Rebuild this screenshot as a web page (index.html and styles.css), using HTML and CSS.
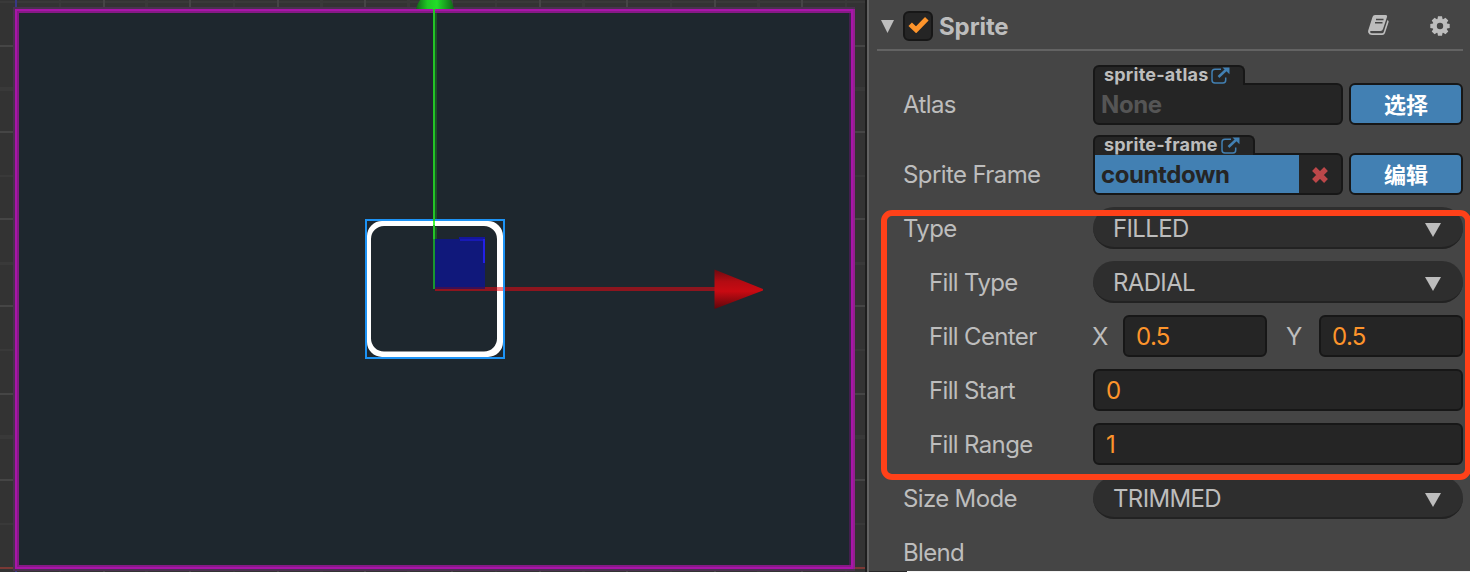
FILE: index.html
```html
<!DOCTYPE html>
<html lang="zh">
<head>
<meta charset="utf-8">
<title>Sprite</title>
<link rel="stylesheet" href="styles.css">
</head>
<body>
<main class="editor">
  <section class="scene">
    <svg class="canvas" width="865" height="572" viewBox="0 0 865 572" shape-rendering="crispEdges">
      <defs>
        <linearGradient id="red" x1="0" y1="0" x2="0" y2="1"><stop offset="0" stop-color="#6b0a10"/><stop offset=".3" stop-color="#b30b12"/><stop offset=".55" stop-color="#c90a12"/><stop offset="1" stop-color="#5c070c"/></linearGradient>
        <linearGradient id="green"><stop offset="0" stop-color="#126418"/><stop offset=".3" stop-color="#20c824"/><stop offset=".55" stop-color="#22dd28"/><stop offset="1" stop-color="#126418"/></linearGradient>
      </defs>
      <rect width="865" height="572" fill="#333"/>
      <path fill="#393939" d="M0 1h865v2H0zM0 87h865v4H0zM0 175h865v2H0zM0 262h865v3H0zM0 349h865v2H0zM0 435h865v4H0zM0 523h865v2H0zM59 0h2v572h-2zM145 0h3v572h-3zM233 0h2v572h-2zM320 0h3v572h-3zM407 0h3v572h-3zM495 0h2v572h-2zM582 0h3v572h-3zM670 0h2v572h-2zM757 0h3v572h-3zM845 0h2v572h-2z"/>
      <path fill="#454545" d="M0 45h865v2H0zM0 131h865v2H0zM0 218h865v2H0zM0 305h865v2H0zM0 393h865v2H0zM0 479h865v2H0zM103 0h2v572h-2zM189 0h2v572h-2zM277 0h2v572h-2zM364 0h2v572h-2zM451 0h2v572h-2zM539 0h2v572h-2zM626 0h2v572h-2zM714 0h2v572h-2zM801 0h2v572h-2z"/>
      <path fill="#7b3935" d="M0 567h865v2H0z"/>
      <path fill="#383887" d="M15 0h2v572h-2z"/>
      <path fill="#4b3050" d="M13 7h842v564H13z"/>
      <path fill="#a914a9" d="M15 9h840v560H15z"/>
      <path fill="#861986" d="M17 11h836v556H17z"/>
      <path fill="#a914a9" d="M851 9h2v560h-2z"/>
      <path fill="#92208f" d="M853 9h2v560h-2z"/>
      <path fill="#43204f" d="M849 13h2v552h-2z"/>
      <path fill="#1e272e" d="M19 13h830v552H19z"/>
      <path shape-rendering="auto" fill="#fff" fill-rule="evenodd" d="M382 221h106a15 15 0 0 1 15 15v106a15 15 0 0 1-15 15H382a15 15 0 0 1-15-15V236a15 15 0 0 1 15-15zM384 226a13 13 0 0 0-13 13v99.500a13 13 0 0 0 13 13h100a13 13 0 0 0 13-13V239a13 13 0 0 0-13-13z"/>
      <rect x="366" y="220" width="138" height="138" fill="none" stroke="#1d93f5" stroke-width="2"/>
      <path fill="#1b5526" d="M435 13h2v206h-2zM435 227h2v13h-2z"/>
      <path fill="#23c526" d="M433 9h2v230h-2z"/>
      <path fill="#19962f" d="M433 239h2v50h-2z"/>
      <path fill="#47fa3d" d="M433 221h2v4h-2z"/>
      <path fill="#10187b" d="M435 239h50v50h-50z"/>
      <path fill="#14169a" d="M459 237h26v2h-26z"/>
      <path fill="#1819b5" d="M460 239h25v2h-25z"/>
      <path fill="#2320e6" d="M483 239h2v24h-2z"/>
      <path fill="#8d151e" d="M435 287h280v4H435z"/>
      <path fill="#3d1055" d="M435 287h50v2h-50z"/>
      <path fill="#ff8084" d="M497 287h6v4h-6z"/>
      <path fill="#1d93f5" d="M503 287h2v4h-2z"/>
      <g shape-rendering="auto">
        <path fill="url(#red)" d="M714.500 269.500 763 289v1.500L714.500 309z"/>
        <path fill="url(#green)" d="M416 9Q417 4 420 0h31q2 4 3 9z"/>
      </g>
    </svg>
  </section>
  <aside class="inspector">
    <header class="component">
      <svg class="fold" width="13" height="13"><path fill="#bdbdbd" d="M0 0h13L6.500 13z"/></svg>
      <span class="check"><svg width="21" height="17" viewBox="0 0 21 17"><path d="m2.200 8.200 5.900 5.600L18.800 2.800" fill="none" stroke="#fd942b" stroke-width="5"/></svg></span>
      <h1 class="name">Sprite</h1>
      <svg class="book" width="22" height="20" viewBox="0 0 22 20">
        <path fill="#bdbdbd" d="M7 0h10.500q2 0 1.500 2l-4 12q-.6 2-2.500 2H3q-1 0-.9 1 .2 1.300 1.900 1.300h10q1.300 0 1.700-1.300L19.500 5q1.500.7 1 2.300L17 18q-.6 2-2.700 2H4q-2.800 0-3.800-2.500-.3-1.500.3-3L4.500 2Q5.100 0 7 0z"/>
        <path d="M8 4.500h7.500M7 7.700h7.500" stroke="#454545" stroke-width="1.400"/>
      </svg>
      <svg class="gear" width="20" height="20" viewBox="-10 -10 20 20">
        <g fill="#bdbdbd"><circle r="7.300"/><path id="t" d="M-2-9.700h4l.8 4h-5.600zM-2 9.700h4l.8-4h-5.600zM-9.700-2v4l4 .8v-5.600zM9.700-2v4l-4 .8v-5.600z"/><use href="#t" transform="rotate(45)"/></g>
        <circle r="3.200" fill="#454545"/>
      </svg>
    </header>
    <div class="props">
      <div class="row asset">
        <span class="label">Atlas</span>
        <div class="slot">
          <span class="tab">sprite-atlas<svg class="link" width="19" height="17" viewBox="0 0 19 17"><path d="M10 2.200H4Q1 2.200 1 5v8q0 3 3 3h8q2.700 0 2.700-3v-2.500" fill="none" stroke="#4280b3" stroke-width="1.500"/><path d="m7.500 10 8-7.500" stroke="#4280b3" stroke-width="2.500"/><path d="M11.500.5H18.500v6.700z" fill="#4280b3"/></svg></span>
          <div class="box"><span class="none">None</span></div>
        </div>
        <button class="btn">选择</button>
      </div>
      <div class="row asset">
        <span class="label">Sprite Frame</span>
        <div class="slot">
          <span class="tab wide">sprite-frame<svg class="link" width="19" height="17" viewBox="0 0 19 17"><path d="M10 2.200H4Q1 2.200 1 5v8q0 3 3 3h8q2.700 0 2.700-3v-2.500" fill="none" stroke="#4280b3" stroke-width="1.500"/><path d="m7.500 10 8-7.500" stroke="#4280b3" stroke-width="2.500"/><path d="M11.500.5H18.500v6.700z" fill="#4280b3"/></svg></span>
          <div class="box"><span class="value">countdown</span><svg class="remove" width="18" height="16" viewBox="0 0 18 16"><path d="m3 2 12 12M15 2 3 14" stroke="#bc4749" stroke-width="5.400"/></svg></div>
        </div>
        <button class="btn">编辑</button>
      </div>
      <div class="row"><span class="label">Type</span><div class="select"><span>FILLED</span><svg class="caret" width="16" height="14"><path fill="#bdbdbd" d="M0 0h16L8 14z"/></svg></div></div>
      <div class="row sub"><span class="label">Fill Type</span><div class="select"><span>RADIAL</span><svg class="caret" width="16" height="14"><path fill="#bdbdbd" d="M0 0h16L8 14z"/></svg></div></div>
      <div class="row sub"><span class="label">Fill Center</span><div class="pair"><span class="axis">X</span><div class="input">0.5</div><span class="axis y">Y</span><div class="input">0.5</div></div></div>
      <div class="row sub"><span class="label">Fill Start</span><div class="input">0</div></div>
      <div class="row sub"><span class="label">Fill Range</span><div class="input">1</div></div>
      <div class="row"><span class="label">Size Mode</span><div class="select"><span>TRIMMED</span><svg class="caret" width="16" height="14"><path fill="#bdbdbd" d="M0 0h16L8 14z"/></svg></div></div>
      <div class="row"><span class="label">Blend</span></div>
    </div>
    <div class="highlight"></div>
    <div class="edge"></div>
  </aside>
</main>
</body>
</html>
```
FILE: styles.css
```css
* { box-sizing: border-box; }
body { margin: 0; background: #333; font-family: Inter, "Noto Sans CJK SC", sans-serif; }
.editor { display: flex; width: 1470px; height: 572px; overflow: hidden; background: #1e1e1e; }
.scene { width: 865px; height: 572px; }
.canvas { display: block; }
.inspector { position: relative; width: 603px; margin-left: 2px; height: 572px; background: #454545; border-left: 2px solid #626262; padding: 0 7px 0 8px; color: #bdbdbd; overflow: hidden; }
.component { display: flex; align-items: center; height: 51px; border-bottom: 2px solid #636363; padding: 3px 13px 0 4px; }
.fold { margin-right: 9px; }
.check { display: flex; align-items: center; justify-content: center; width: 30px; height: 30px; padding-bottom: 3px; background: #252525; border: 2px solid #171717; border-radius: 6px; margin-right: 6px; }
.name { flex: 1; margin: 0; padding-top: 2px; font-size: 24px; line-height: 30px; font-weight: 700; letter-spacing: -0.1px; }
.book { margin-right: 40px; margin-top: -2px; }
.gear { margin-top: -1px; }
.props { padding: 14px 0 0 26px; }
.row { display: flex; height: 42px; margin-bottom: 12px; font-size: 24px; line-height: 44px; letter-spacing: -0.65px; }
.label { width: 190px; flex: none; white-space: nowrap; }
.sub { padding-left: 26px; }
.sub .label { width: 164px; }
.asset { height: 60px; align-items: flex-end; margin-bottom: 10px; }
.asset .label { height: 42px; letter-spacing: -0.6px; }
.asset + .asset { margin-bottom: 12px; }
.slot { width: 250px; margin-right: 6px; }
.tab { position: relative; z-index: 1; display: flex; width: 152px; height: 20px; margin-bottom: -2px; padding-left: 9px; background: #252525; border: 2px solid #171717; border-bottom: 0; border-radius: 6px 6px 0 0; font-size: 18px; line-height: 15px; font-weight: 700; letter-spacing: 0.22px; white-space: nowrap; }
.wide { width: 162px; }
.link { margin: 0 0 0 3px; flex: none; }
.box { display: flex; height: 42px; background: #252525; border: 2px solid #171717; border-radius: 0 6px 6px 6px; line-height: 40px; font-weight: 700; letter-spacing: -0.4px; overflow: hidden; }
.none { padding-left: 6px; color: #555; }
.value { width: 204px; padding-left: 6px; background: #4280b3; color: #252525; }
.remove { margin: 12px 0 0 12px; }
.btn { width: 114px; height: 42px; padding: 0 0 2px; background: #4280b3; border: 2px solid #171717; border-radius: 6px; color: #fff; font: 700 22px "Noto Sans CJK SC", sans-serif; }
.select { display: flex; justify-content: space-between; align-items: center; flex: 1; height: 42px; padding: 0 22px 0 20px; background: #2e2e2e; border-bottom: 2px solid #222; border-radius: 21px; line-height: 40px; }
.select span { padding-top: 4px; }
.caret { margin-top: 5px; }
.input { flex: 1; height: 42px; padding-left: 11px; background: #252525; border: 2px solid #171717; border-radius: 6px; color: #fd942b; line-height: 40px; }
.pair { display: flex; flex: 1; }
.axis { width: 30px; margin-left: -1px; margin-right: 1px; }
.y { width: 52px; padding-left: 20px; }
.highlight { position: absolute; left: 12px; top: 210px; width: 590px; height: 270px; border: 6px solid #ff4119; border-radius: 11px; }
.edge { position: absolute; left: 0; right: 0; bottom: 0; height: 1px; background: linear-gradient(90deg, #282828 38px, #f4f4f4 38px); }
```
